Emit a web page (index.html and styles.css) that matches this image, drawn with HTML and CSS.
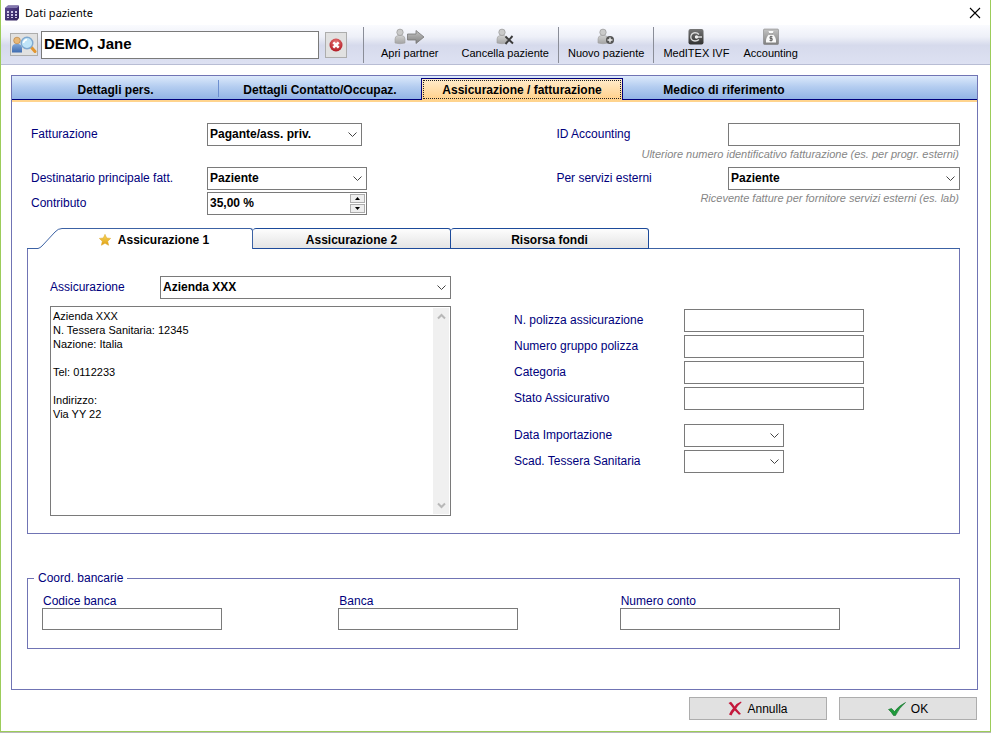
FILE: index.html
```html
<!DOCTYPE html>
<html lang="it">
<head>
    <meta charset="utf-8">
    <title>Dati paziente</title>
    <link rel="stylesheet" href="styles.css">
</head>
<body>
    <svg class="defs" width="0" height="0" aria-hidden="true">
        <defs>
            <linearGradient id="grey" x1="0" y1="0" x2="0" y2="1">
                <stop offset="0" stop-color="#c4c4c4"/>
                <stop offset="1" stop-color="#808080"/>
            </linearGradient>
            <linearGradient id="light" x1="0" y1="0" x2="0" y2="1">
                <stop offset="0" stop-color="#d2d2d2"/>
                <stop offset="1" stop-color="#a2a2a2"/>
            </linearGradient>
            <linearGradient id="dark" x1="0" y1="0" x2="0" y2="1">
                <stop offset="0" stop-color="#777"/>
                <stop offset="1" stop-color="#303030"/>
            </linearGradient>
            <linearGradient id="blue" x1="0" y1="0" x2="0" y2="1">
                <stop offset="0" stop-color="#7fa6d8"/>
                <stop offset="1" stop-color="#3f6cb0"/>
            </linearGradient>
            <linearGradient id="purple" x1="0" y1="0" x2="1" y2="1">
                <stop offset="0" stop-color="#5c4a92"/>
                <stop offset="1" stop-color="#2c1c58"/>
            </linearGradient>
            <linearGradient id="gold" x1="0" y1="0" x2="0" y2="1">
                <stop offset="0" stop-color="#f8d860"/>
                <stop offset="1" stop-color="#e0a010"/>
            </linearGradient>
            <radialGradient id="red" cx="0.5" cy="0.3" r="0.7">
                <stop offset="0" stop-color="#ea7a7a"/>
                <stop offset="1" stop-color="#b01822"/>
            </radialGradient>
            <g id="person">
                <path d="M1 15V11Q1 8 4 7.500H8Q11 8 11 11V15Q6 16.500 1 15Z" fill="url(#light)" stroke="#a0a0a0" stroke-width=".6"/>
                <circle cx="6" cy="4.300" r="3.200" fill="#cacaca" stroke="#989898" stroke-width=".7"/>
            </g>
        </defs>
    </svg>

    <div class="window">
        <header class="titlebar">
            <svg width="14" height="16" viewBox="0 0 14 16">
                <path d="M3 0.500H13Q14 0.500 14 1.500V13L12 15.500H1Q0 15.500 0 14.500V3Z" fill="url(#purple)"/>
                <path d="M3 0.500H14L12 3H0Z" fill="#8277ae"/>
                <path d="M2 6h2v2H2zM6 6h2v2H6zM10 6h2v2h-2zM2 9h2v2H2zM6 9h2v2H6zM10 9h2v2h-2zM2 12h2v1H2zM6 12h2v1H6zM10 12h2v1h-2z" fill="#cfc6e6"/>
            </svg>
            <h1>Dati paziente</h1>
            <button class="close" type="button" aria-label="Chiudi">
                <svg width="12" height="12" viewBox="0 0 12 12"><path d="M1 1L11 11M11 1L1 11" stroke="#000" stroke-width="1.100"/></svg>
            </button>
        </header>

        <div class="toolbar">
            <button class="icon-btn search-btn" type="button" aria-label="Cerca">
                <svg width="26" height="18" viewBox="0 0 26 18">
                    <path d="M1 16.500V12Q1 8 5 8H8Q11 9 11 12V16.500Z" fill="url(#blue)"/>
                    <circle cx="6" cy="4.500" r="3.300" fill="#e8b878" stroke="#b98546" stroke-width=".7"/>
                    <path d="M20.500 11.500L24 15.500" stroke="#e29632" stroke-width="3" stroke-linecap="round"/>
                    <circle cx="16" cy="7" r="5.800" fill="#bfe4f8" stroke="#7fa8cf" stroke-width="1.400"/>
                    <path d="M12.500 7Q13 4 16 3.500" stroke="#fff" fill="none" stroke-width="1.500"/>
                </svg>
            </button>
            <input class="patient" type="text" value="DEMO, Jane" aria-label="Paziente">
            <button class="icon-btn clear-btn" type="button" aria-label="Cancella ricerca">
                <svg width="14" height="14" viewBox="0 0 14 14">
                    <circle cx="7" cy="7" r="6.500" fill="url(#red)"/>
                    <path d="M4.300 4.300L9.700 9.700M9.700 4.300L4.300 9.700" stroke="#fff" stroke-width="2.400"/>
                </svg>
            </button>
            <div class="group partner">
                <button class="tool" type="button">
                    <svg width="32" height="17" viewBox="0 0 32 17">
                        <use href="#person"/>
                        <path d="M13.500 6H22V2.500L30 9L22 15.500V12H13.500Z" fill="url(#grey)" stroke="#777" stroke-width=".8"/>
                    </svg>
                    Apri partner
                </button>
                <button class="tool" type="button">
                    <svg width="18" height="17" viewBox="0 0 18 17">
                        <use href="#person"/>
                        <path d="M9.500 8.500L17 15.500M16.500 8L9.500 16" stroke="#3c3c3c" stroke-width="1.900"/>
                    </svg>
                    Cancella paziente
                </button>
            </div>
            <div class="group">
                <button class="tool" type="button">
                    <svg width="18" height="17" viewBox="0 0 18 17">
                        <use href="#person"/>
                        <circle cx="13" cy="12" r="4" fill="#555"/>
                        <path d="M13 9.500V14.500M10.500 12H15.500" stroke="#eee" stroke-width="1.400"/>
                    </svg>
                    Nuovo paziente
                </button>
            </div>
            <div class="group">
                <button class="tool" type="button">
                    <svg width="16" height="17" viewBox="0 0 16 17">
                        <rect x="0.500" y="1" width="15" height="15.500" rx="2" fill="url(#dark)"/>
                        <path d="M11 6.500Q9.500 4.700 7 4.700Q3 5.200 2.800 9Q3 12.700 7 13Q9.500 13 11 11.500M7 9H14" stroke="#ddd" stroke-width="1.300" fill="none"/>
                        <circle cx="8.500" cy="9" r="1.700" fill="#eee"/>
                    </svg>
                    MedITEX IVF
                </button>
                <button class="tool" type="button">
                    <svg width="16" height="17" viewBox="0 0 16 17">
                        <rect x="0.500" y="1" width="15" height="15.500" rx="1" fill="url(#grey)" stroke="#777" stroke-width=".5"/>
                        <path d="M5.500 3H10.500L9.500 6Q13.500 9 13 14.500H3Q2.500 9 6.500 6Z" fill="#fafafa"/>
                        <path d="M6 6H10M9.500 8.700H7V10.500H9.200V12.400H6.500M8 7.800V13.500" stroke="#666" fill="none"/>
                    </svg>
                    Accounting
                </button>
            </div>
        </div>

        <main class="main">
            <nav class="tabs">
                <button class="tab" type="button">Dettagli pers.</button>
                <button class="tab" type="button">Dettagli Contatto/Occupaz.</button>
                <button class="tab active" type="button"><span>Assicurazione / fatturazione</span></button>
                <button class="tab" type="button">Medico di riferimento</button>
            </nav>

            <div class="page">
                <div class="billing">
                    <div class="billing-left">
                        <label for="fatturazione">Fatturazione</label>
                        <select id="fatturazione" class="short"><option>Pagante/ass. priv.</option></select>
                        <label for="destinatario" class="second">Destinatario principale fatt.</label>
                        <select id="destinatario" class="second"><option>Paziente</option></select>
                        <label for="contributo">Contributo</label>
                        <div class="spinner">
                            <input id="contributo" type="text" value="35,00 %">
                            <div class="spin-buttons">
                                <button type="button" aria-label="Aumenta"><svg width="5" height="3" viewBox="0 0 5 3"><path d="M0 3L2.500 0L5 3Z"/></svg></button>
                                <button type="button" aria-label="Diminuisci"><svg width="5" height="3" viewBox="0 0 5 3"><path d="M0 0L2.500 3L5 0Z"/></svg></button>
                            </div>
                        </div>
                    </div>
                    <div class="billing-right">
                        <label for="accounting">ID Accounting</label>
                        <input id="accounting" type="text">
                        <p class="hint">Ulteriore numero identificativo fatturazione (es. per progr. esterni)</p>
                        <label for="servizi">Per servizi esterni</label>
                        <select id="servizi"><option>Paziente</option></select>
                        <p class="hint">Ricevente fatture per fornitore servizi esterni (es. lab)</p>
                    </div>
                </div>

                <nav class="subtabs">
                    <svg class="slope" width="35" height="21" viewBox="0 0 35 21"><path d="M0 20.500H11Q13 20 15 18L28 4Q31 0.500 35 0.500" fill="none" stroke="#3c62a4"/></svg>
                    <button class="subtab first" type="button">
                        <svg width="12" height="12" viewBox="0 0 12 12"><path d="M6 0.300L7.700 4L11.700 4.400L8.700 7.200L9.600 11.300L6 9.300L2.400 11.300L3.300 7.200L0.300 4.400L4.300 4Z" fill="url(#gold)" stroke="#dba528" stroke-width=".5"/></svg>
                        Assicurazione 1
                    </button>
                    <button class="subtab" type="button">Assicurazione 2</button>
                    <button class="subtab" type="button">Risorsa fondi</button>
                    <span class="rest"></span>
                </nav>

                <section class="insurance">
                    <div class="insurer">
                        <div class="insurer-pick">
                            <label for="assicurazione">Assicurazione</label>
                            <select id="assicurazione"><option>Azienda XXX</option></select>
                        </div>
                        <div class="details">
                            <textarea aria-label="Dati assicurazione">Azienda XXX
N. Tessera Sanitaria: 12345
Nazione: Italia

Tel: 0112233

Indirizzo:
Via YY 22</textarea>
                            <div class="scroll">
                                <svg width="9" height="7" viewBox="0 0 9 7"><path d="M1 5.500L4.500 2L8 5.500"/></svg>
                                <svg width="9" height="7" viewBox="0 0 9 7"><path d="M1 1.500L4.500 5L8 1.500"/></svg>
                            </div>
                        </div>
                    </div>
                    <div class="policy">
                        <label for="polizza">N. polizza assicurazione</label>
                        <input id="polizza" type="text">
                        <label for="gruppo">Numero gruppo polizza</label>
                        <input id="gruppo" type="text">
                        <label for="categoria">Categoria</label>
                        <input id="categoria" type="text">
                        <label for="stato">Stato Assicurativo</label>
                        <input id="stato" type="text">
                        <label for="data" class="dates">Data Importazione</label>
                        <select id="data" class="date dates"><option></option></select>
                        <label for="scadenza">Scad. Tessera Sanitaria</label>
                        <select id="scadenza" class="date"><option></option></select>
                    </div>
                </section>

                <fieldset class="bank">
                    <legend>Coord. bancarie</legend>
                    <div class="bank-fields">
                        <div class="bank-field">
                            <label for="codice">Codice banca</label>
                            <input id="codice" type="text">
                        </div>
                        <div class="bank-field">
                            <label for="banca">Banca</label>
                            <input id="banca" type="text">
                        </div>
                        <div class="bank-field wide">
                            <label for="conto">Numero conto</label>
                            <input id="conto" type="text">
                        </div>
                    </div>
                </fieldset>
            </div>
        </main>

        <footer class="actions">
            <button class="action" type="button">
                <svg width="14" height="15" viewBox="0 0 14 15"><path d="M0.500 2L3 0.800Q5 3 6.600 5.500Q9 2 13 0.500L13.500 1.500Q10 4.500 8.200 7.500L13 13L11 13.800L6.800 9.500Q4.500 12 3.500 14.500L1 13.500Q2.500 10 5 7.300Q3 4 0.500 2Z" fill="#c4183c"/></svg>
                Annulla
            </button>
            <button class="action" type="button">
                <svg width="18" height="14" viewBox="0 0 18 14"><path d="M0.500 7.500L3.500 6.500L6.500 9.500Q11 3.500 17.500 0.500Q11 6 7.500 13.500H5.500Q3.500 10 0.500 7.500Z" fill="#1f9a3c" stroke="#127028" stroke-width=".6"/></svg>
                OK
            </button>
        </footer>
    </div>
</body>
</html>
```
FILE: styles.css
```css
* {
    box-sizing: border-box;
}

body {
    margin: 0;
    background: #b9b9b9;
    font-family: "Liberation Sans", Arial, sans-serif;
    font-size: 12px;
    color: #000;
}

button, input, select, textarea {
    font: inherit;
    color: inherit;
    margin: 0;
    border-radius: 0;
}

button {
    padding: 0;
    cursor: pointer;
}

svg {
    display: block;
    flex: none;
}

.defs {
    position: absolute;
}

.window {
    min-height: calc(100vh - 1px);
    background: #fff;
    border: 1px solid #9ccc5a;
    border-top: none;
}

/* title bar */
.titlebar {
    display: flex;
    align-items: center;
    height: 25px;
    padding: 0 9px 0 4px;
    gap: 6px;
}

.titlebar h1 {
    flex: 1;
    margin: 0;
    font-family: "Noto Sans", sans-serif;
    font-size: 11px;
    font-weight: normal;
}

.close {
    border: none;
    background: none;
}

/* toolbar */
.toolbar {
    display: flex;
    align-items: center;
    height: 40px;
    padding-left: 9px;
    background: linear-gradient(#fafbfe 0%, #eef0f8 30%, #d6daec 52%, #dde1f2 100%);
    border-bottom: 1px solid #b8bdd4;
}

.icon-btn {
    display: flex;
    align-items: center;
    justify-content: center;
    background: #e1e1e1;
    border: 1px solid #adadad;
}

.search-btn {
    width: 28px;
    height: 23px;
}

.clear-btn {
    width: 22px;
    height: 26px;
    margin-right: 16px;
}

.patient {
    width: 278px;
    height: 28px;
    margin: 0 6px 0 3px;
    padding: 0 2px 2px;
    border: 1px solid #7a7a7a;
    font-size: 15px;
    font-weight: bold;
}

.group {
    display: flex;
    height: 36px;
    padding: 0 2px;
    border-left: 1px solid #8a8d98;
}

.group.partner {
    gap: 9px;
    padding-left: 10px;
}

.tool {
    display: flex;
    flex-direction: column;
    align-items: center;
    gap: 2px;
    padding: 1px 7px 0;
    border: none;
    background: none;
    font-size: 11px;
    line-height: 13px;
    white-space: nowrap;
}

/* main tabs */
.main {
    margin: 10px 12px 0 10px;
    border: 1px solid #7074b4;
}

.tabs {
    display: flex;
    height: 26px;
    padding-top: 2px;
    background: linear-gradient(#dce9fb, #b4cdf0 45%, #8fb2e4);
    border-bottom: 2px solid #ffd48e;
    box-shadow: inset 0 -1px #00007c;
}

.tab {
    flex: 0 1 202px;
    padding: 2px 0 0;
    border: none;
    background: none;
    font-weight: bold;
    white-space: nowrap;
}

.tab:first-child {
    flex-basis: 207px;
    background: linear-gradient(#6d8fd0, #6d8fd0) right 0 top 2px / 1px 17px no-repeat;
}

.tab.active {
    padding: 1px;
    border: 1px solid #00007c;
    border-bottom: none;
    background: linear-gradient(#ffeccc, #ffd08a);
}

.tab.active span {
    display: flex;
    align-items: center;
    justify-content: center;
    height: 100%;
    border: 1px dotted #222;
}

/* page content */
.page {
    padding: 21px 17px 40px 15px;
}

label {
    color: #00007c;
    white-space: nowrap;
    line-height: 23px;
}

input, select {
    width: 100%;
    height: 23px;
    padding: 0 2px 2px;
    border: 1px solid #7a7a7a;
    background: #fff;
    font-weight: bold;
}

select {
    appearance: none;
    background: #fff url("data:image/svg+xml,%3Csvg xmlns='http://www.w3.org/2000/svg' width='9' height='6'%3E%3Cpath d='M0.500 0.500L4.500 4.500L8.500 0.500' fill='none' stroke='%23444'/%3E%3C/svg%3E") right 4px center no-repeat;
}

.billing {
    display: grid;
    grid-template-columns: 526fr 404fr;
    padding-left: 4px;
}

.billing-left {
    display: grid;
    grid-template-columns: 176px 160px;
    row-gap: 2px;
    align-content: start;
}

.billing-left .short {
    width: 155px;
}

.billing-left .second {
    margin-top: 19px;
}

.billing-right {
    display: grid;
    grid-template-columns: 1fr 232px;
    grid-auto-rows: 23px 21px;
}

.hint {
    grid-column: 1 / -1;
    margin: 0;
    padding-right: 1px;
    font-size: 11px;
    font-style: italic;
    line-height: 16px;
    color: #868686;
    text-align: right;
    white-space: nowrap;
}

.spinner {
    display: flex;
    height: 23px;
    padding: 1px;
    border: 1px solid #7a7a7a;
}

.spinner input {
    flex: 1;
    min-width: 0;
    height: 19px;
    padding: 0 1px 1px;
    border: none;
}

.spin-buttons {
    display: flex;
    flex-direction: column;
    gap: 1px;
}

.spin-buttons button {
    display: flex;
    flex: 1;
    align-items: center;
    justify-content: center;
    width: 15px;
    background: #eee;
    border: 1px solid #adadad;
}

/* insurance tabs */
.subtabs {
    display: flex;
    height: 21px;
    margin-top: 13px;
}

.subtab {
    flex: 0 1 198px;
    padding: 2px 0 0;
    border: 1px solid #1c4a9a;
    border-left-width: 0;
    border-radius: 3px 3px 0 0;
    background: linear-gradient(#fdfdfd, #e4e4e4);
    font-weight: bold;
    white-space: nowrap;
}

.subtab.first {
    display: flex;
    flex-basis: 191px;
    align-items: center;
    justify-content: center;
    gap: 7px;
    padding-right: 6px;
    border-color: #3c62a4;
    border-bottom: none;
    border-top-left-radius: 0;
    background: none;
}

.rest {
    flex: 1;
    border-bottom: 1px solid #3c62a4;
}

.insurance {
    display: flex;
    gap: 63px;
    padding: 27px 22px 17px;
    border: 1px solid #7074b4;
    border-top: none;
}

.insurer {
    flex: 0 1 401px;
}

.insurer-pick {
    display: grid;
    grid-template-columns: 110px 1fr;
}

.details {
    display: flex;
    height: 210px;
    margin-top: 7px;
    padding: 1px;
    border: 1px solid #7a7a7a;
}

.details textarea {
    flex: 1;
    padding: 1px;
    border: none;
    resize: none;
    overflow: hidden;
    font-size: 11px;
    line-height: 14px;
}

.scroll {
    display: flex;
    flex-direction: column;
    align-items: center;
    justify-content: space-between;
    width: 16px;
    padding: 5px 0;
    background: #f0f0f0;
}

.scroll path {
    fill: none;
    stroke: #b8b8b8;
    stroke-width: 2;
}

.policy {
    display: grid;
    grid-template-columns: 170px 180px;
    row-gap: 3px;
    align-content: start;
    padding-top: 33px;
}

.policy .date {
    width: 100px;
}

.policy .dates {
    margin-top: 11px;
}

/* bank details */
.bank {
    min-width: 0;
    margin: 36px 0 0;
    padding: 0 14px 18px;
    border: 1px solid #7074b4;
}

.bank legend {
    margin-left: -8px;
    padding: 0 4px;
    line-height: 16px;
    color: #00007c;
}

.bank-fields {
    display: grid;
    grid-template-columns: 296fr 281fr 325fr;
    padding-top: 8px;
}

.bank-field {
    display: flex;
    flex-direction: column;
    width: 180px;
}

.bank-field.wide {
    width: 220px;
}

.bank-field label {
    padding-left: 1px;
    line-height: 14px;
}

.bank-field input {
    height: 22px;
}

/* dialog buttons */
.actions {
    display: flex;
    justify-content: flex-end;
    gap: 12px;
    padding: 7px 13px 11px;
}

.action {
    display: flex;
    align-items: center;
    justify-content: center;
    gap: 5px;
    width: 138px;
    height: 23px;
    border: 1px solid #adadad;
    background: #e1e1e1;
}
```
